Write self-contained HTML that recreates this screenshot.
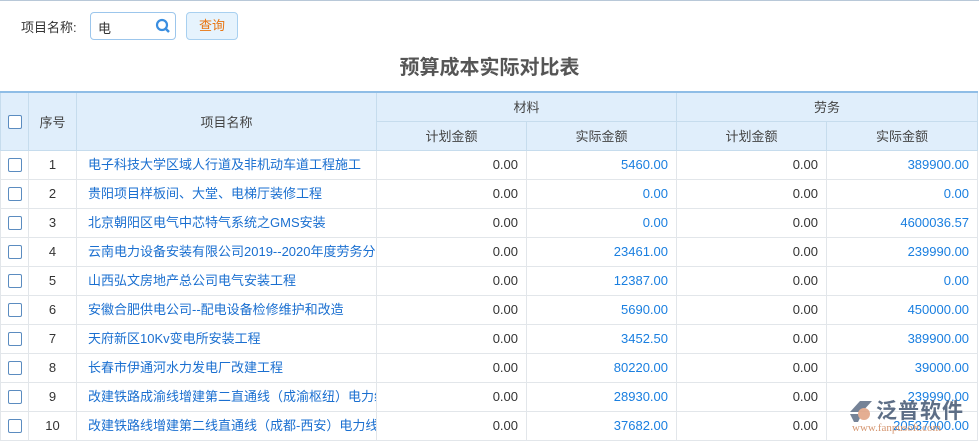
<!DOCTYPE html>
<html><head><meta charset="utf-8"><style>
*{margin:0;padding:0;box-sizing:border-box}
body{width:979px;height:443px;overflow:hidden;background:#fff;font-family:"Liberation Sans","Noto Sans CJK SC",sans-serif;font-size:13px;color:#333;position:relative}
.top{position:absolute;left:0;top:0;width:979px;height:1px;background:#b8c8d8}
.lbl{position:absolute;left:21px;top:17px;font-size:13px}
.inp{position:absolute;left:90px;top:12px;width:86px;height:28px;border:1px solid #9cc6ec;border-radius:4px;padding:5px 7px;font-size:13px}
.btn{position:absolute;left:186px;top:12px;width:52px;height:28px;border:1px solid #a8d0f0;border-radius:4px;background:#e6f3fd;color:#e87511;text-align:center;line-height:26px}
h1{position:absolute;left:0;width:979px;top:51px;text-align:center;font-size:20px;font-weight:bold;color:#555}
table{position:absolute;left:0;top:91px;border-collapse:collapse;table-layout:fixed;width:977px}
td,th{border:1px solid #e2e6ea;font-weight:normal;white-space:nowrap;overflow:hidden}
tbody tr{height:29px}
thead tr{height:29px}
th{background:#e0eefb;color:#444;border-color:#c6dced}
thead tr:first-child th{border-top:2px solid #8fbde6}
td{text-align:right;padding-right:8px;line-height:16px}
td.c,th{text-align:center;padding:0}
td.n{text-align:left;padding-left:11px;color:#1a6fd0}
td.b{color:#1a7fe0}
.cb{display:inline-block;width:14px;height:14px;border:1px solid #5b8cc0;border-radius:2px;vertical-align:middle;background:#fff}
.wm{position:absolute;top:395px;font-size:21px;color:#5d6e86;font-weight:bold;letter-spacing:1px}
.wm2{position:absolute;left:852px;top:422px;font-size:11px;color:#d59670;font-family:"Liberation Serif",serif}
</style></head><body>
<div class="top"></div>
<div class="lbl">项目名称:</div>
<div class="inp">电<svg style="position:absolute;right:4px;top:5px" width="16" height="16" viewBox="0 0 16 16"><circle cx="7" cy="7" r="5" fill="none" stroke="#3a8ee0" stroke-width="2.2"/><path d="M10.5 10.5L14 14" stroke="#3a8ee0" stroke-width="2.5"/></svg></div>
<div class="btn">查询</div>
<h1>预算成本实际对比表</h1>
<table>
<colgroup><col style="width:28px"><col style="width:48px"><col style="width:300px"><col style="width:150px"><col style="width:150px"><col style="width:150px"><col style="width:151px"></colgroup>
<thead>
<tr><th rowspan="2"><span class="cb"></span></th><th rowspan="2">序号</th><th rowspan="2">项目名称</th><th colspan="2">材料</th><th colspan="2">劳务</th></tr>
<tr><th>计划金额</th><th>实际金额</th><th>计划金额</th><th>实际金额</th></tr>
</thead>
<tbody>
<tr><td class="c"><span class="cb"></span></td><td class="c">1</td><td class="n">电子科技大学区域人行道及非机动车道工程施工</td><td>0.00</td><td class="b">5460.00</td><td>0.00</td><td class="b">389900.00</td></tr>
<tr><td class="c"><span class="cb"></span></td><td class="c">2</td><td class="n">贵阳项目样板间、大堂、电梯厅装修工程</td><td>0.00</td><td class="b">0.00</td><td>0.00</td><td class="b">0.00</td></tr>
<tr><td class="c"><span class="cb"></span></td><td class="c">3</td><td class="n">北京朝阳区电气中芯特气系统之GMS安装</td><td>0.00</td><td class="b">0.00</td><td>0.00</td><td class="b">4600036.57</td></tr>
<tr><td class="c"><span class="cb"></span></td><td class="c">4</td><td class="n">云南电力设备安装有限公司2019--2020年度劳务分包</td><td>0.00</td><td class="b">23461.00</td><td>0.00</td><td class="b">239990.00</td></tr>
<tr><td class="c"><span class="cb"></span></td><td class="c">5</td><td class="n">山西弘文房地产总公司电气安装工程</td><td>0.00</td><td class="b">12387.00</td><td>0.00</td><td class="b">0.00</td></tr>
<tr><td class="c"><span class="cb"></span></td><td class="c">6</td><td class="n">安徽合肥供电公司--配电设备检修维护和改造</td><td>0.00</td><td class="b">5690.00</td><td>0.00</td><td class="b">450000.00</td></tr>
<tr><td class="c"><span class="cb"></span></td><td class="c">7</td><td class="n">天府新区10Kv变电所安装工程</td><td>0.00</td><td class="b">3452.50</td><td>0.00</td><td class="b">389900.00</td></tr>
<tr><td class="c"><span class="cb"></span></td><td class="c">8</td><td class="n">长春市伊通河水力发电厂改建工程</td><td>0.00</td><td class="b">80220.00</td><td>0.00</td><td class="b">39000.00</td></tr>
<tr><td class="c"><span class="cb"></span></td><td class="c">9</td><td class="n">改建铁路成渝线增建第二直通线（成渝枢纽）电力线</td><td>0.00</td><td class="b">28930.00</td><td>0.00</td><td class="b">239990.00</td></tr>
<tr><td class="c"><span class="cb"></span></td><td class="c">10</td><td class="n">改建铁路线增建第二线直通线（成都-西安）电力线</td><td>0.00</td><td class="b">37682.00</td><td>0.00</td><td class="b">20537000.00</td></tr>
</tbody></table>
<svg style="position:absolute;left:848px;top:398px;opacity:.85" width="26" height="26" viewBox="0 0 26 26"><path d="M2 14L12 3h12L14 14z" fill="#5d6e86"/><path d="M2 16h12l-4 8H6z" fill="#5d6e86"/><circle cx="16" cy="16" r="6" fill="#e0a080"/></svg>
<div class="wm" style="left:876px">泛普软件</div>
<div class="wm2">www.fanpusoft.com</div>
</body></html>
